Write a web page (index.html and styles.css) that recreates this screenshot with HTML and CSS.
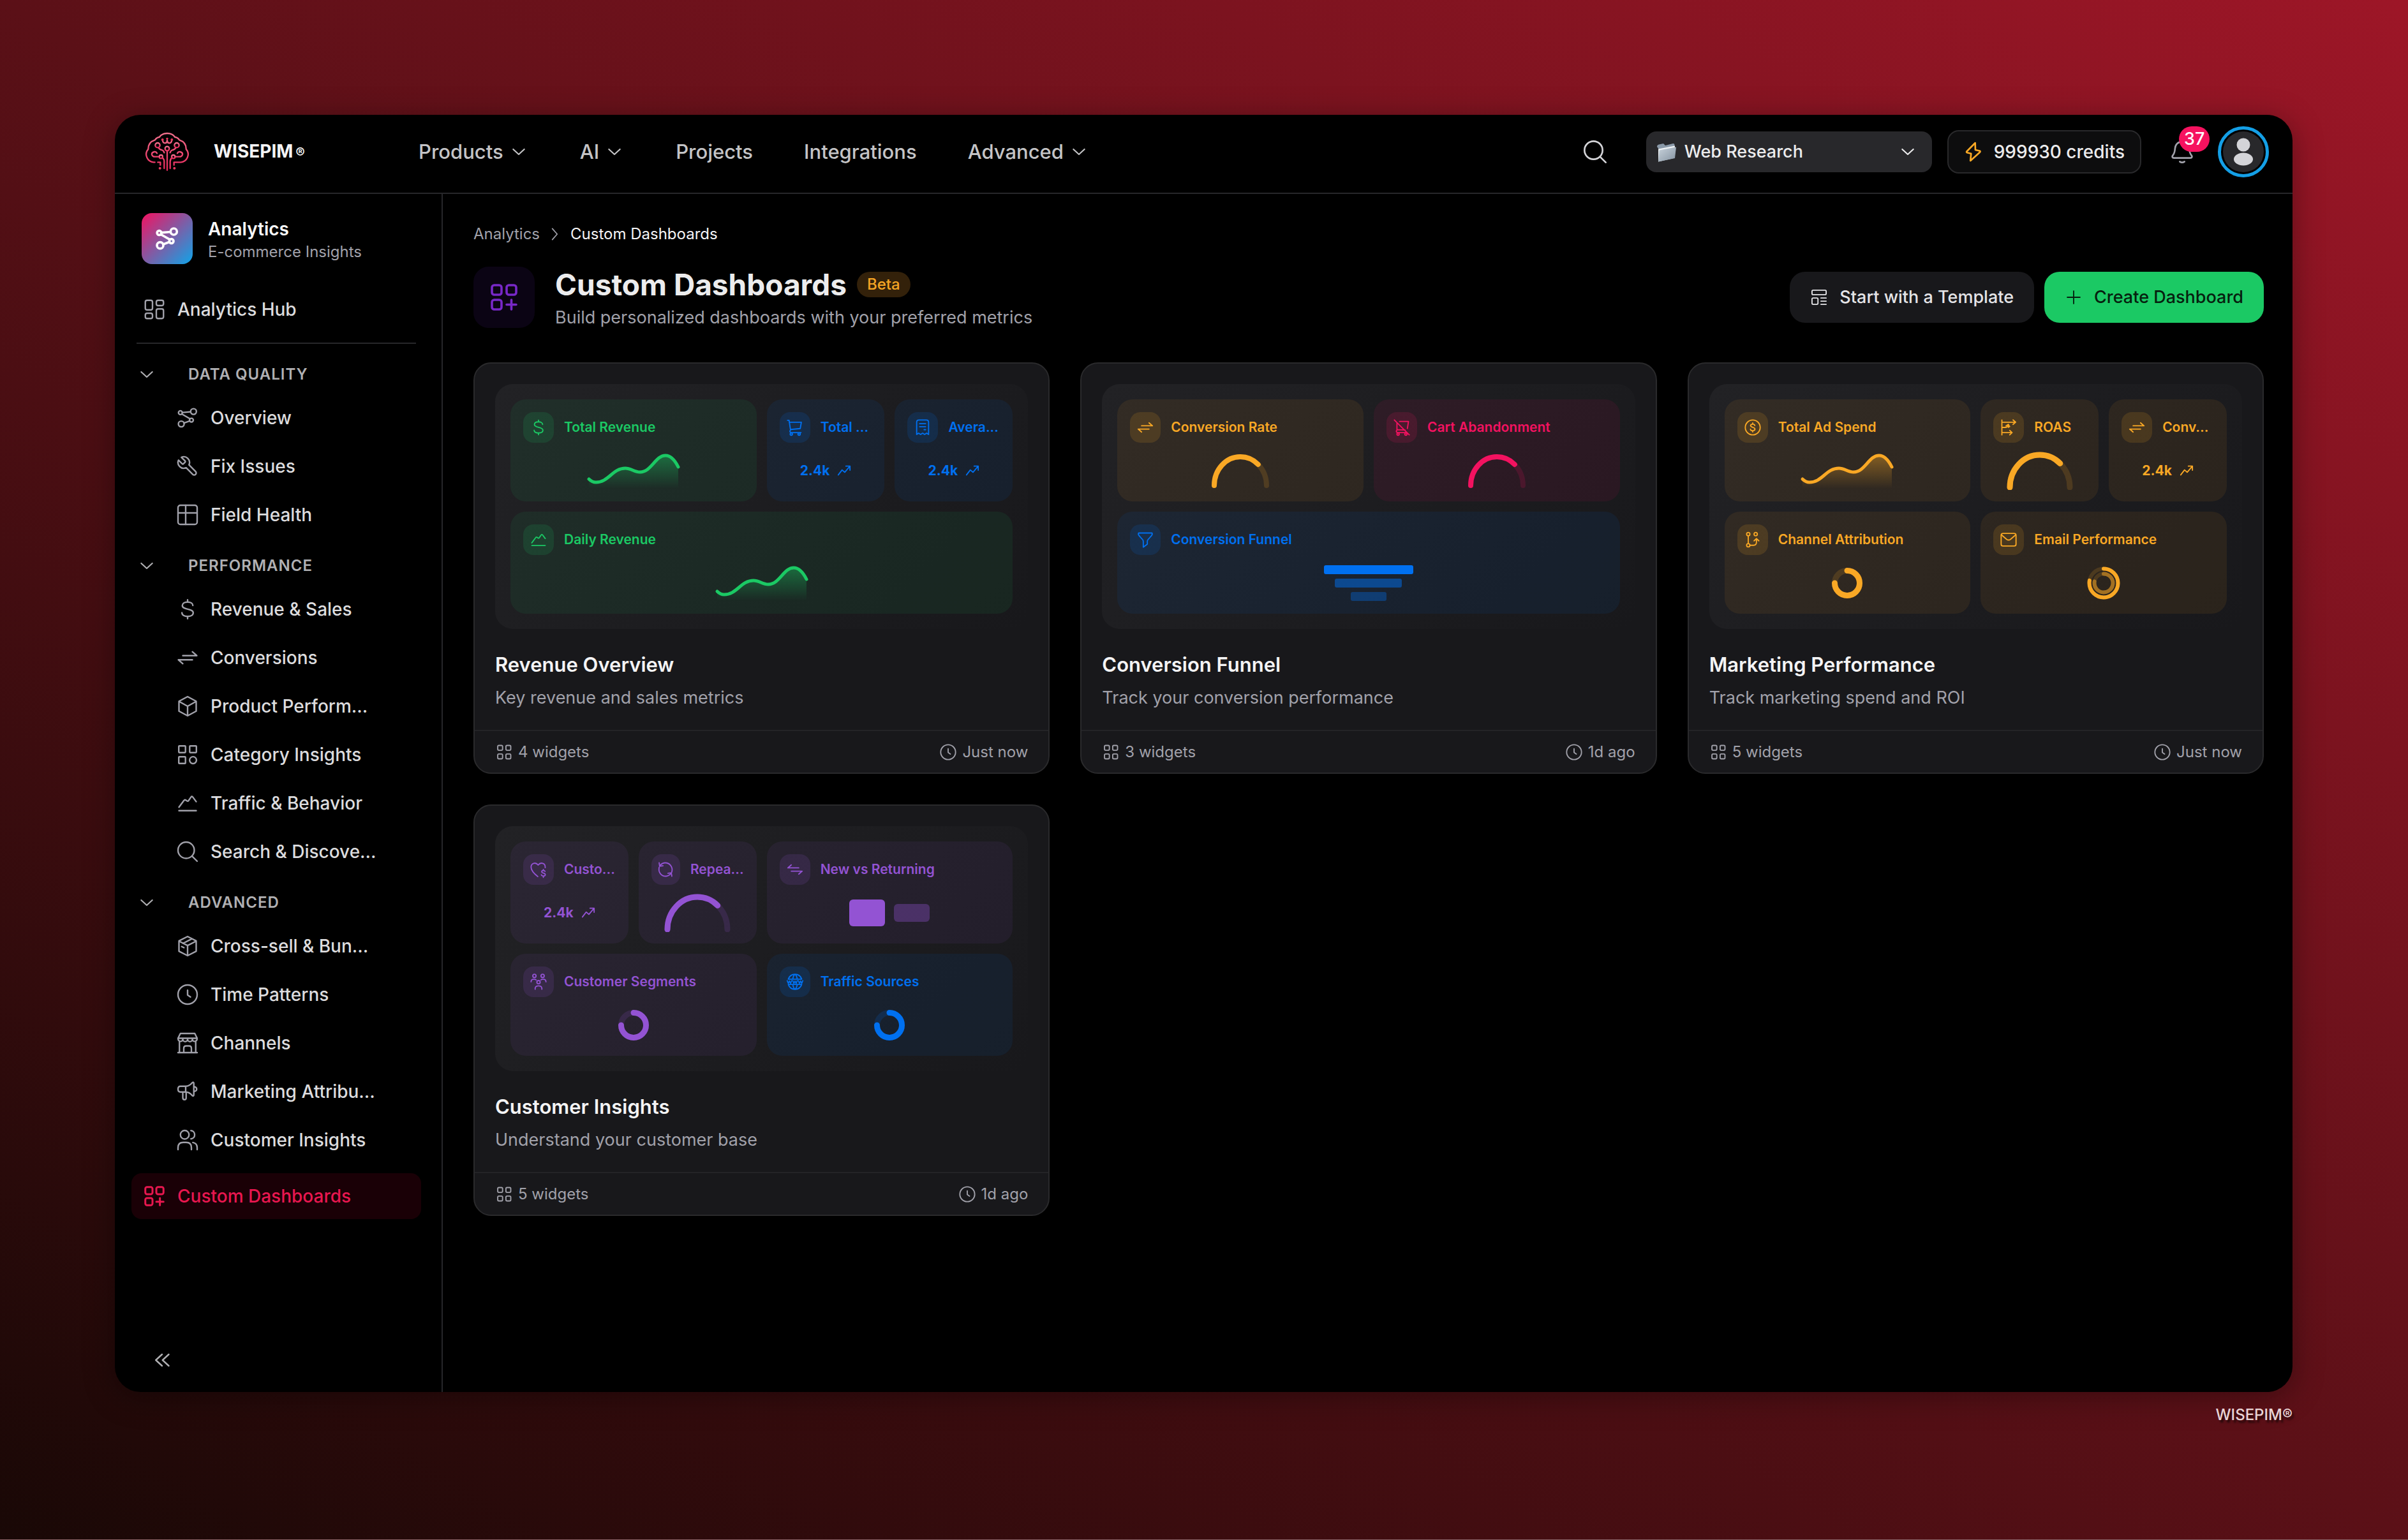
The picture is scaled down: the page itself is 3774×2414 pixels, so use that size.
FILE: index.html
```html
<!DOCTYPE html>
<html lang="en">
<head>
<meta charset="utf-8">
<meta name="viewport" content="width=device-width, initial-scale=1">
<title>Custom Dashboards – WISEPIM</title>
<link rel="stylesheet" href="styles.css">
</head>
<body>
<svg class="defs" aria-hidden="true">
  <defs>
    <linearGradient id="logoFill" x1="0" y1="0" x2="0" y2="1"><stop offset="0" stop-color="#f0708c"/><stop offset="1" stop-color="#e8295c"/></linearGradient>
    <linearGradient id="fade" x1="0" y1="0" x2="0" y2="1"><stop offset="0" stop-color="#fff" stop-opacity=".45"/><stop offset="1" stop-color="#fff" stop-opacity="0"/></linearGradient>
    <mask id="fadeMask" maskUnits="userSpaceOnUse" x="0" y="0" width="140" height="56"><rect width="140" height="56" fill="url(#fade)"/></mask>
    <linearGradient id="folderFill" x1="0" y1="0" x2="1" y2="1"><stop offset="0" stop-color="#c9d3dc"/><stop offset="1" stop-color="#8493a1"/></linearGradient>
  </defs>
  <symbol id="nodes" viewBox="0 0 24 24"><circle cx="4.5" cy="6.6" r="2"/><circle cx="18.2" cy="5.4" r="3"/><circle cx="16" cy="14.4" r="2"/><circle cx="5.4" cy="18.4" r="3"/><path d="M6.5 6.4l8.7-.7M6 8l8.6 5M14.2 15.2L8.2 17.4"/></symbol>
  <symbol id="dash" viewBox="0 0 24 24"><rect x="2.5" y="2.5" width="7.5" height="10" rx="1.8"/><rect x="14" y="2.5" width="7.5" height="5.5" rx="1.8"/><rect x="2.5" y="16" width="7.5" height="5.5" rx="1.8"/><rect x="14" y="11.5" width="7.5" height="10" rx="1.8"/></symbol>
  <symbol id="dash-add" viewBox="0 0 24 24"><rect x="2.5" y="2.5" width="7.5" height="7.5" rx="1.8"/><rect x="14" y="2.5" width="7.5" height="7.5" rx="1.8"/><rect x="2.5" y="14" width="7.5" height="7.5" rx="1.8"/><path d="M17.75 14v7.5M14 17.75h7.5"/></symbol>
  <symbol id="wrench" viewBox="0 0 24 24"><path transform="translate(24 0) scale(-1 1)" d="M14.7 6.3a1 1 0 0 0 0 1.4l1.6 1.6a1 1 0 0 0 1.4 0l3.77-3.77a6 6 0 0 1-7.94 7.94l-6.91 6.91a2.12 2.12 0 0 1-3-3l6.91-6.91a6 6 0 0 1 7.94-7.94l-3.76 3.76z"/></symbol>
  <symbol id="table" viewBox="0 0 24 24"><rect x="2" y="2" width="20" height="20" rx="2.5"/><path d="M10 2v20M2 10h20"/></symbol>
  <symbol id="dollar" viewBox="0 0 24 24"><path d="M12 2.2v2.3M12 19.5v2.3M17.5 8c0-2-2.2-3.5-5.5-3.5S6.5 6 6.5 8.2c0 4.8 11.4 2.6 11.4 7.5 0 2.4-2.5 3.8-5.9 3.8s-5.9-1.4-5.9-3.8"/></symbol>
  <symbol id="swap" viewBox="0 0 24 24"><path d="M7 9.8h14.6l-4.6-4M17 14.2H2.4l4.6 4"/></symbol>
  <symbol id="swap-l" viewBox="0 0 24 24"><path d="M17 9.8H2.4l4.6-4M7 14.2h14.6l-4.6 4"/></symbol>
  <symbol id="cube" viewBox="0 0 24 24"><path d="M12 2l9 4.8v10.4L12 22l-9-4.8V6.8zM3 7l9 5 9-5M12 12v10"/></symbol>
  <symbol id="category" viewBox="0 0 24 24"><rect x="2.8" y="2.8" width="7" height="7" rx=".6"/><rect x="14.2" y="2.8" width="7" height="7" rx=".6"/><rect x="2.8" y="14.2" width="7" height="7" rx=".6"/><circle cx="17.7" cy="17.7" r="3.6"/></symbol>
  <symbol id="trend" viewBox="0 0 24 24"><path d="M3 19.8h18M3 16.2l5.2-7q.8-1.2 2-.4l1 .8q1 .8 1.8-.3L15.6 5.6q.8-1.2 1.8 0L21 10.4"/></symbol>
  <symbol id="search" viewBox="0 0 24 24"><circle cx="10.5" cy="10.5" r="8.5"/><path d="M16.7 16.7L22 22"/></symbol>
  <symbol id="package" viewBox="0 0 24 24"><path d="M12 2l9 4.6v10.8L12 22l-9-4.600V6.600zM3 6.800l9 4.600 9-4.600M12 11.400V22M7.200 9.200l9-4.600M5.800 12.500l2.400 1.200"/></symbol>
  <symbol id="clock" viewBox="0 0 24 24"><circle cx="12" cy="12" r="10"/><path d="M12 7.500v5l3 2"/></symbol>
  <symbol id="store" viewBox="0 0 24 24"><path d="M3.500 11v10.800M20.500 11v10.800M2 22h20M4.500 2h15L22 7H2zM2 7c0 4.200 5 4.200 5 .8 0 3.600 5 3.600 5 0 0 3.600 5 3.600 5 0 0 3.400 5 3.400 5-.8M8 22v-4.500c0-1.500.8-2.500 2.500-2.500h3c1.700 0 2.500 1 2.500 2.500V22"/></symbol>
  <symbol id="mega" viewBox="0 0 24 24"><path d="M10 6.500H4.500Q2 6.500 2 9.500t2.500 3H10zM10 6.500c3 0 5.500-2 7-3.800q1.500-1 1.500 1v11.600q0 2-1.500 1c-1.500-1.800-4-3.800-7-3.800M7 12.500v6q0 2 1.800 2t1.700-2v-6M18.500 7c4 .5 4 4.500 0 5"/></symbol>
  <symbol id="users" viewBox="0 0 24 24"><circle cx="9" cy="6.500" r="4.500"/><path d="M2 22v-2q0-5.500 5.500-5.500h3q5.500 0 5.500 5.500v2M15.500 2.200c5.200.2 5.200 8.400 0 8.600M17.500 14.600Q22 15.500 22 20v2"/></symbol>
  <symbol id="chev" viewBox="0 0 24 24"><path d="M5.500 9l6.500 6 6.500-6"/></symbol>
  <symbol id="chev-r" viewBox="0 0 24 24"><path d="M8 4l7 8-7 8"/></symbol>
  <symbol id="chev-ll" viewBox="0 0 24 24"><path d="M12 6l-6.500 6 6.500 6M19 6l-6.500 6 6.500 6"/></symbol>
  <symbol id="bolt" viewBox="0 0 24 24"><path d="M14 1.500L4.200 11.400q-.9 1 .3 1.500l4.700 1.200-.8 8.400L19.600 12.400q.8-1-.3-1.500l-5.100-1.200z"/></symbol>
  <symbol id="bell" viewBox="0 0 24 24"><path d="M12 2.500C7.800 2.500 5.500 5.500 5.300 9c-.2 3.500-.6 4.500-2 6.200-1 1.300-.6 2.600 1 2.600h15.400c1.600 0 2-1.300 1-2.600-1.400-1.700-1.800-2.700-2-6.200-.2-3.500-2.500-6.500-6.700-6.500zM9.800 21.200q2.200 1.600 4.400 0"/></symbol>
  <symbol id="template" viewBox="0 0 24 24"><rect x="2.500" y="2.500" width="19" height="6" rx="1.500"/><rect x="2.500" y="13" width="8" height="8.500" rx="1.500"/><path d="M14.500 13h7M14.500 17.200h7M14.500 21.500h7"/></symbol>
  <symbol id="plus" viewBox="0 0 24 24"><path d="M12 3.500v17M3.500 12h17"/></symbol>
  <symbol id="grid" viewBox="0 0 24 24"><rect x="3.500" y="3" width="6.500" height="6.500" rx="1.500"/><rect x="14.500" y="3" width="6.500" height="6.500" rx="1.500"/><rect x="3.500" y="14.500" width="6.500" height="6.500" rx="1.500"/><rect x="14.500" y="14.500" width="6.500" height="6.500" rx="1.500"/></symbol>
  <symbol id="cart" viewBox="0 0 24 24"><path d="M2 2.500h2l2 13M5 5h15.500l-1.500 8.500L6 14.800M6 15.500q-2 2 .5 3.500H20"/><circle cx="7" cy="21" r="1.500"/><circle cx="17.500" cy="21" r="1.500"/></symbol>
  <symbol id="cart-off" viewBox="0 0 24 24"><path d="M2 2l20 20M9 4h12l-1.500 9.500M5.500 6v9l11 .5M5.500 15.500q-2 2 .5 3.500H18"/><circle cx="7" cy="21" r="1.500"/><circle cx="17.500" cy="21" r="1.500"/></symbol>
  <symbol id="receipt" viewBox="0 0 24 24"><path d="M4 21.500V5q0-3 3-3h10q3 0 3 3v16.500l-2.600-1.800-2.700 1.800-2.700-1.800-2.700 1.800-2.700-1.800zM8 7h8M8 11h8M14 15h2"/></symbol>
  <symbol id="up" viewBox="0 0 24 24"><path d="M2 19l6.500-8.500 4.500 4L21.500 4.500M15 4h7v7"/></symbol>
  <symbol id="filter" viewBox="0 0 24 24"><path d="M3 3h18q1 2-1 4l-4.500 5q-.8 1-.8 2.500v3.500l-5.400 4v-7.500q0-1.500-.8-2.500L4 7Q2 5 3 3z"/></symbol>
  <symbol id="coin" viewBox="0 0 24 24"><circle cx="12" cy="12" r="10"/><path d="M14.800 9.500c0-1.200-1.200-1.900-2.800-1.900s-2.900.7-2.900 2.100c0 2.800 5.900 1.600 5.900 4.500 0 1.400-1.400 2.200-3 2.200s-3-.8-3-2.100M12 6v1.500M12 16.500V18"/></symbol>
  <symbol id="roas" viewBox="0 0 24 24"><path d="M3 2v20M3 5h18M18 2l3.500 3L18 8M3 19h13M13.500 16l3.200 3-3.200 3M3 12h5q3 0 3.500-3.500M8.500 10l3-2 2 3M12 8v4"/></symbol>
  <symbol id="branch" viewBox="0 0 24 24"><circle cx="6" cy="4.500" r="2.200"/><circle cx="16" cy="4.500" r="2.200"/><circle cx="6" cy="19.500" r="2.200"/><path d="M6 6.700v10.600M8.200 19.500H13q4 0 4-4V11M13.800 13.500L17 10.500l3.200 3"/></symbol>
  <symbol id="mail" viewBox="0 0 24 24"><rect x="2" y="3.500" width="20" height="17" rx="2.500"/><path d="M2.500 5.500l7 6q2.500 1.900 5 0l7-6"/></symbol>
  <symbol id="heart" viewBox="0 0 24 24"><path d="M11 21.500C6 17.500 2 13.500 2 8.800 2 3.500 8 1.500 11.500 6 15 1.500 21.500 3.500 21 9.500M20.800 14.500q-.6-1.200-2.300-1.200-2.200 0-2.200 1.700c0 2.400 4.800 1.400 4.800 3.800 0 1.700-1.300 1.900-2.600 1.900-1.700 0-2.500-.6-2.700-1.700M18.500 12v1.300M18.500 21v1.500"/></symbol>
  <symbol id="refresh" viewBox="0 0 24 24"><path d="M20.500 15.500C22.500 8 17 2.500 11 3c-3 .3-5 1.800-6.500 4M3.500 3l.7 4.500 4.500-.5M3.500 9C1.800 16 7 21.500 13 21c3-.3 5-1.800 6.500-4M20.500 21l-.7-4.500-4.500.5"/></symbol>
  <symbol id="segments" viewBox="0 0 24 24"><circle cx="6.500" cy="4" r="2.200"/><circle cx="17.500" cy="4" r="2.200"/><circle cx="12" cy="12.500" r="2.200"/><path d="M2 12q0-3.500 4-3.500 1.800 0 2.800 1M22 12q0-3.500-4-3.500-1.800 0-2.800 1M7.500 22v-1.500q.5-3 4.500-3t4.500 3V22"/></symbol>
  <symbol id="globe" viewBox="0 0 24 24"><path d="M3 8.500C6-.2 18-.2 21 8.500zM3 15.500c3 8.700 15 8.700 18 0zM9 8.500q.8-5 3-6.500 2.200 1.500 3 6.500M9 15.500q.8 5 3 6.500 2.200-1.500 3-6.500M1.500 10.500l1.500 3.500 1.500-3 1.500 3 1.500-3.500M9 10.500l1.500 3.500 1.500-3 1.500 3 1.500-3.500M16.500 10.500L18 14l1.500-3 1.500 3 1.500-3.500"/></symbol>
  <symbol id="spark" viewBox="0 0 140 56"><path class="area" mask="url(#fadeMask)" d="M0 41Q5 46 11 46C31 46 37 24 57 24C66 24 71 30 80 30C98 30 104 4 120 4C130 4 136 14 140 22V56H0z"/><path class="line" d="M0 41Q5 46 11 46C31 46 37 24 57 24C66 24 71 30 80 30C98 30 104 4 120 4C130 4 136 14 140 22"/></symbol>
</svg>

<div class="window">
  <header class="topbar">
    <a class="brand" href="#">
      <svg class="logo" viewBox="48 48 216 192" aria-hidden="true">
        <path d="M98 193H92Q70 191 61 171Q51 149 67 131Q66 99 99 88Q107 76 119 75Q131 57 156 57Q181 57 193 75Q205 76 213 88Q246 99 245 131Q261 149 251 171Q242 191 220 193H188V206M124 206V193H112M156 140V230M108 151Q104 142 95 144Q82 147 84 157Q87 167 98 167H118M204 151Q208 142 217 144Q230 147 228 157Q225 167 214 167H194M115 124Q120 134 130 135Q140 138 142 148M197 124Q192 134 182 135Q172 138 170 148M133 172Q142 178 142 190V222M179 172Q170 178 170 190V222M135 92Q136 103 147 103Q156 102 156 90Q156 102 165 103Q176 103 177 92"/>
        <circle cx="111" cy="113" r="11"/><circle cx="201" cy="113" r="11"/><circle cx="156" cy="129" r="10"/><circle cx="127" cy="167" r="8"/><circle cx="185" cy="167" r="8"/>
        <g class="dots"><circle cx="134" cy="87" r="6"/><circle cx="156" cy="82" r="5"/><circle cx="178" cy="87" r="6"/><circle cx="122" cy="221" r="6"/><circle cx="190" cy="221" r="6"/></g>
      </svg>
      <span class="brand-name">WISEPIM<small>®</small></span>
    </a>
    <nav class="topnav" aria-label="Main">
      <button type="button">Products<svg class="ic s32"><use href="#chev"/></svg></button>
      <button type="button">AI<svg class="ic s32"><use href="#chev"/></svg></button>
      <a href="#">Projects</a>
      <a href="#">Integrations</a>
      <button type="button">Advanced<svg class="ic s32"><use href="#chev"/></svg></button>
    </nav>
    <div class="tools">
      <button class="icon-btn search" type="button" aria-label="Search"><svg class="ic s40"><use href="#search"/></svg></button>
      <label class="picker">
        <svg class="folder" viewBox="0 0 34 34" aria-hidden="true"><path d="M3 9q0-3 3-3.500l7-1.500 3 3 12-3q2.500-.4 2.500 2V12L8 16z" fill="#8a99a8"/><path d="M5 12.500L31 7.500v19L5 32.500z" fill="#eef2f5"/><path d="M6.500 14.500L33 9.500l-2 17.500L5 32.500z" fill="url(#folderFill)"/></svg>
        <select aria-label="Project"><option>Web Research</option></select>
        <svg class="ic s32"><use href="#chev"/></svg>
      </label>
      <button class="credits" type="button"><svg class="ic s32"><use href="#bolt"/></svg>999930 credits</button>
      <button class="icon-btn bell" type="button" aria-label="Notifications"><svg class="ic s40"><use href="#bell"/></svg><span class="count">37</span></button>
      <button class="avatar" type="button" aria-label="Account"><svg viewBox="0 0 64 64"><circle cx="32" cy="32" r="32" fill="#28282b"/><circle cx="32" cy="21" r="10.500" fill="#d4d4d8"/><ellipse cx="32" cy="43.500" rx="15" ry="10" fill="#d4d4d8"/></svg></button>
    </div>
  </header>

  <div class="body">
    <aside class="sidebar">
      <div class="module">
        <span class="module-icon"><svg class="ic s40"><use href="#nodes"/></svg></span>
        <div class="module-text"><strong>Analytics</strong><span>E-commerce Insights</span></div>
      </div>
      <nav class="menu" aria-label="Analytics">
        <a class="item" href="#"><svg class="ic s36"><use href="#dash"/></svg>Analytics Hub</a>
        <hr>
        <button class="group" type="button"><svg class="ic s32"><use href="#chev"/></svg>Data Quality</button>
        <a class="item sub" href="#"><svg class="ic s36"><use href="#nodes"/></svg>Overview</a>
        <a class="item sub" href="#"><svg class="ic s36"><use href="#wrench"/></svg>Fix Issues</a>
        <a class="item sub" href="#"><svg class="ic s36"><use href="#table"/></svg>Field Health</a>
        <button class="group" type="button"><svg class="ic s32"><use href="#chev"/></svg>Performance</button>
        <a class="item sub" href="#"><svg class="ic s36"><use href="#dollar"/></svg>Revenue &amp; Sales</a>
        <a class="item sub" href="#"><svg class="ic s36"><use href="#swap"/></svg>Conversions</a>
        <a class="item sub" href="#"><svg class="ic s36"><use href="#cube"/></svg>Product Perform...</a>
        <a class="item sub" href="#"><svg class="ic s36"><use href="#category"/></svg>Category Insights</a>
        <a class="item sub" href="#"><svg class="ic s36"><use href="#trend"/></svg>Traffic &amp; Behavior</a>
        <a class="item sub" href="#"><svg class="ic s36"><use href="#search"/></svg>Search &amp; Discove...</a>
        <button class="group" type="button"><svg class="ic s32"><use href="#chev"/></svg>Advanced</button>
        <a class="item sub" href="#"><svg class="ic s36"><use href="#package"/></svg>Cross-sell &amp; Bun...</a>
        <a class="item sub" href="#"><svg class="ic s36"><use href="#clock"/></svg>Time Patterns</a>
        <a class="item sub" href="#"><svg class="ic s36"><use href="#store"/></svg>Channels</a>
        <a class="item sub" href="#"><svg class="ic s36"><use href="#mega"/></svg>Marketing Attribu...</a>
        <a class="item sub" href="#"><svg class="ic s36"><use href="#users"/></svg>Customer Insights</a>
        <a class="item active" href="#" aria-current="page"><svg class="ic s36"><use href="#dash-add"/></svg>Custom Dashboards</a>
      </nav>
      <button class="icon-btn collapse" type="button" aria-label="Collapse sidebar"><svg class="ic s36"><use href="#chev-ll"/></svg></button>
    </aside>

    <main class="main">
      <nav class="crumbs" aria-label="Breadcrumb"><a href="#">Analytics</a><svg class="ic s26"><use href="#chev-r"/></svg><span>Custom Dashboards</span></nav>
      <div class="page-head">
        <span class="page-icon"><svg class="ic s48"><use href="#dash-add"/></svg></span>
        <div class="page-title">
          <div class="title-row"><h1>Custom Dashboards</h1><span class="beta">Beta</span></div>
          <p>Build personalized dashboards with your preferred metrics</p>
        </div>
        <div class="actions">
          <button class="btn" type="button"><svg class="ic s28"><use href="#template"/></svg>Start with a Template</button>
          <button class="btn primary" type="button"><svg class="ic s28"><use href="#plus"/></svg>Create Dashboard</button>
        </div>
      </div>

      <div class="cards">
        <article class="card">
          <div class="preview">
            <section class="tile wide green"><h3><span class="chip"><svg class="ic s28"><use href="#dollar"/></svg></span>Total Revenue</h3><div class="viz"><svg class="spark"><use href="#spark"/></svg></div></section>
            <section class="tile blue"><h3><span class="chip"><svg class="ic s28"><use href="#cart"/></svg></span>Total ...</h3><div class="viz"><b>2.4k</b><svg class="ic s22"><use href="#up"/></svg></div></section>
            <section class="tile blue"><h3><span class="chip"><svg class="ic s28"><use href="#receipt"/></svg></span>Avera...</h3><div class="viz"><b>2.4k</b><svg class="ic s22"><use href="#up"/></svg></div></section>
            <section class="tile full green"><h3><span class="chip"><svg class="ic s28"><use href="#trend"/></svg></span>Daily Revenue</h3><div class="viz"><svg class="spark"><use href="#spark"/></svg></div></section>
          </div>
          <h2>Revenue Overview</h2><p>Key revenue and sales metrics</p>
          <footer><span><svg class="ic s28"><use href="#grid"/></svg>4 widgets</span><span><svg class="ic s28"><use href="#clock"/></svg>Just now</span></footer>
        </article>

        <article class="card">
          <div class="preview">
            <section class="tile wide amber"><h3><span class="chip"><svg class="ic s28"><use href="#swap"/></svg></span>Conversion Rate</h3><div class="viz"><svg class="gauge" viewBox="0 0 92 56"><path class="track" d="M5 51A41 45 0 0 1 87 51"/><path pathLength="100" stroke-dasharray="73 200" d="M5 51A41 45 0 0 1 87 51"/></svg></div></section>
            <section class="tile wide rose"><h3><span class="chip"><svg class="ic s28"><use href="#cart-off"/></svg></span>Cart Abandonment</h3><div class="viz"><svg class="gauge" viewBox="0 0 92 56"><path class="track" d="M5 51A41 45 0 0 1 87 51"/><path pathLength="100" stroke-dasharray="73 200" d="M5 51A41 45 0 0 1 87 51"/></svg></div></section>
            <section class="tile full blue"><h3><span class="chip"><svg class="ic s28"><use href="#filter"/></svg></span>Conversion Funnel</h3><div class="viz funnel"><i></i><i></i><i></i></div></section>
          </div>
          <h2>Conversion Funnel</h2><p>Track your conversion performance</p>
          <footer><span><svg class="ic s28"><use href="#grid"/></svg>3 widgets</span><span><svg class="ic s28"><use href="#clock"/></svg>1d ago</span></footer>
        </article>

        <article class="card">
          <div class="preview">
            <section class="tile wide amber"><h3><span class="chip"><svg class="ic s28"><use href="#coin"/></svg></span>Total Ad Spend</h3><div class="viz"><svg class="spark"><use href="#spark"/></svg></div></section>
            <section class="tile amber"><h3><span class="chip"><svg class="ic s28"><use href="#roas"/></svg></span>ROAS</h3><div class="viz"><svg class="gauge large" viewBox="0 0 104 60"><path class="track" d="M5 56A47 51 0 0 1 99 56"/><path pathLength="100" stroke-dasharray="73 200" d="M5 56A47 51 0 0 1 99 56"/></svg></div></section>
            <section class="tile amber"><h3><span class="chip"><svg class="ic s28"><use href="#swap"/></svg></span>Conv...</h3><div class="viz"><b>2.4k</b><svg class="ic s22"><use href="#up"/></svg></div></section>
            <section class="tile wide amber"><h3><span class="chip"><svg class="ic s28"><use href="#branch"/></svg></span>Channel Attribution</h3><div class="viz"><svg class="donut" viewBox="0 0 52 52"><circle class="track" cx="26" cy="26" r="19.500"/><path pathLength="100" stroke-dasharray="75 200" d="M26 6.500a19.500 19.500 0 1 1 0 39 19.500 19.500 0 1 1 0-39"/></svg></div></section>
            <section class="tile wide amber"><h3><span class="chip"><svg class="ic s28"><use href="#mail"/></svg></span>Email Performance</h3><div class="viz"><svg class="donut rings" viewBox="0 0 52 52"><circle class="track" cx="26" cy="26" r="22.500"/><path pathLength="100" stroke-dasharray="78 200" d="M26 3.500a22.500 22.500 0 1 1 0 45 22.500 22.500 0 1 1 0-45"/><circle class="track" cx="26" cy="26" r="14.500"/><path opacity=".5" pathLength="100" stroke-dasharray="78 200" d="M26 11.500a14.500 14.500 0 1 1 0 29 14.500 14.500 0 1 1 0-29"/></svg></div></section>
          </div>
          <h2>Marketing Performance</h2><p>Track marketing spend and ROI</p>
          <footer><span><svg class="ic s28"><use href="#grid"/></svg>5 widgets</span><span><svg class="ic s28"><use href="#clock"/></svg>Just now</span></footer>
        </article>

        <article class="card">
          <div class="preview">
            <section class="tile purple"><h3><span class="chip"><svg class="ic s28"><use href="#heart"/></svg></span>Custo...</h3><div class="viz"><b>2.4k</b><svg class="ic s22"><use href="#up"/></svg></div></section>
            <section class="tile purple"><h3><span class="chip"><svg class="ic s28"><use href="#refresh"/></svg></span>Repea...</h3><div class="viz"><svg class="gauge large" viewBox="0 0 104 60"><path class="track" d="M5 56A47 51 0 0 1 99 56"/><path pathLength="100" stroke-dasharray="73 200" d="M5 56A47 51 0 0 1 99 56"/></svg></div></section>
            <section class="tile wide purple"><h3><span class="chip"><svg class="ic s28"><use href="#swap-l"/></svg></span>New vs Returning</h3><div class="viz compare"><i></i><i></i></div></section>
            <section class="tile wide purple"><h3><span class="chip"><svg class="ic s28"><use href="#segments"/></svg></span>Customer Segments</h3><div class="viz"><svg class="donut" viewBox="0 0 52 52"><circle class="track" cx="26" cy="26" r="19.500"/><path pathLength="100" stroke-dasharray="75 200" d="M26 6.500a19.500 19.500 0 1 1 0 39 19.500 19.500 0 1 1 0-39"/></svg></div></section>
            <section class="tile wide blue"><h3><span class="chip"><svg class="ic s28"><use href="#globe"/></svg></span>Traffic Sources</h3><div class="viz"><svg class="donut" viewBox="0 0 52 52"><circle class="track" cx="26" cy="26" r="19.500"/><path pathLength="100" stroke-dasharray="75 200" d="M26 6.500a19.500 19.500 0 1 1 0 39 19.500 19.500 0 1 1 0-39"/></svg></div></section>
          </div>
          <h2>Customer Insights</h2><p>Understand your customer base</p>
          <footer><span><svg class="ic s28"><use href="#grid"/></svg>5 widgets</span><span><svg class="ic s28"><use href="#clock"/></svg>1d ago</span></footer>
        </article>
      </div>
    </main>
  </div>
</div>
<div class="credit">WISEPIM®</div>
</body>
</html>
```
FILE: styles.css
```css
* { box-sizing: border-box; }

body {
  margin: 0;
  min-height: 100vh;
  padding: 180px 181px 0 180px;
  display: flex;
  flex-direction: column;
  background: linear-gradient(to top right, #190806 0%, #5b1017 50%, #9d1627 100%);
  border-bottom: 1px solid #8a6266;
  color: #ececed;
  font-family: Inter, "Liberation Sans", sans-serif;
  font-size: 27px;
  line-height: 40px;
}

h1, h2, h3, p { margin: 0; }
a { color: inherit; text-decoration: none; }
button, select {
  font: inherit;
  color: inherit;
  background: none;
  border: 0;
  padding: 0;
  margin: 0;
  appearance: none;
  cursor: pointer;
}
.defs { position: absolute; width: 0; height: 0; }

.ic {
  flex: none;
  display: block;
  fill: none;
  stroke: currentColor;
  stroke-width: 1.6;
  stroke-linecap: round;
  stroke-linejoin: round;
}
.s22 { width: 22px; height: 22px; }
.s26 { width: 26px; height: 26px; }
.s28 { width: 28px; height: 28px; }
.s32 { width: 32px; height: 32px; }
.s36 { width: 36px; height: 36px; }
.s40 { width: 40px; height: 40px; }
.s48 { width: 48px; height: 48px; }

.window {
  flex: 1;
  display: flex;
  flex-direction: column;
  background: #000;
  border-radius: 40px;
  overflow: hidden;
  box-shadow: 0 8px 48px rgba(0, 0, 0, .35);
}

/* Top bar */
.topbar {
  display: flex;
  align-items: center;
  height: 124px;
  padding: 0 37px 6px 46px;
  border-bottom: 2px solid #27272a;
}
.brand { display: flex; align-items: center; gap: 37px; width: 430px; }
.logo {
  width: 72px;
  height: 64px;
  fill: none;
  stroke: url(#logoFill);
  stroke-width: 7;
  stroke-linecap: round;
  stroke-linejoin: round;
}
.logo .dots { fill: #e8395f; stroke: none; }
.brand-name { font-size: 28px; font-weight: 700; color: #f4f4f5; }
.brand-name small { margin-left: 4px; font-size: 22px; }
.topnav {
  display: flex;
  gap: 80px;
  font-size: 31px;
  font-weight: 500;
  color: #c4c4c6;
}
.topnav button { display: flex; align-items: center; gap: 8px; }
.tools { display: flex; align-items: center; margin-left: auto; }
.icon-btn { color: #d4d4d8; }
.search { margin-right: 60px; }
.picker {
  display: flex;
  align-items: center;
  width: 448px;
  height: 64px;
  padding: 0 22px 0 14px;
  gap: 12px;
  border-radius: 16px;
  background: #28282b;
  color: #ececed;
}
.folder { width: 34px; height: 34px; }
.picker select { flex: 1; font-weight: 500; text-align: left; }
.credits {
  display: flex;
  align-items: center;
  gap: 16px;
  height: 68px;
  margin-left: 24px;
  padding: 0 24px 0 23px;
  border: 2px solid #29292b;
  border-radius: 18px;
  background: #0d0d0e;
  font-size: 28px;
  font-weight: 500;
}
.credits .ic { color: #f9a825; stroke-width: 2; }
.bell { position: relative; margin-left: 44px; color: #a1a1aa; }
.count {
  position: absolute;
  left: 15px;
  bottom: 20px;
  padding: 0 8px;
  border-radius: 20px;
  background: #f6125f;
  color: #fff;
  font-weight: 500;
  font-size: 27px;
  line-height: 40px;
}
.avatar {
  width: 80px;
  height: 80px;
  margin-left: 36px;
  padding: 3px;
  border: 5px solid #149fe6;
  border-radius: 50%;
}
.avatar svg { display: block; }

/* Sidebar */
.body { flex: 1; display: grid; grid-template-columns: 514px 1fr; }
.sidebar {
  display: flex;
  flex-direction: column;
  padding: 30px 32px 32px 26px;
  border-right: 2px solid #27272a;
}
.module { display: flex; align-items: center; gap: 24px; padding-left: 16px; }
.module-icon {
  display: grid;
  place-items: center;
  width: 80px;
  height: 80px;
  border-radius: 16px;
  background: linear-gradient(135deg, #f31260, #0ea5e9);
  color: #fff;
}
.module-icon .ic { stroke-width: 2.2; }
.module-text { display: flex; flex-direction: column; padding-top: 6px; line-height: 36px; }
.module-text strong { font-size: 28px; font-weight: 600; color: #fafafa; }
.module-text span { font-size: 24px; color: #a1a1aa; }
.menu { display: flex; flex-direction: column; gap: 4px; margin-top: 35px; }
.item {
  display: flex;
  align-items: center;
  gap: 18px;
  height: 72px;
  padding: 0 18px;
  border-radius: 16px;
  font-size: 28px;
  font-weight: 500;
  color: #dcdcde;
  white-space: nowrap;
}
.item .ic { color: #a1a1aa; }
.sub { padding-left: 70px; }
.menu hr { width: 438px; height: 2px; margin: 12px 8px 16px; border: 0; background: #27272a; }
.group {
  display: flex;
  align-items: center;
  gap: 49px;
  height: 56px;
  padding-left: 8px;
  font-size: 24px;
  font-weight: 600;
  letter-spacing: 1px;
  text-transform: uppercase;
  color: #b0b0b3;
}
.sub + .group { margin-top: 12px; }
.active { margin-top: 12px; background: #1a0006; color: #e8174f; }
.active .ic { color: inherit; stroke-width: 2; }
.collapse { align-self: flex-start; margin: auto 0 0 30px; color: #b0b0b3; }

/* Page */
.main { padding: 47px 45px 48px 48px; min-width: 0; }
.crumbs { display: flex; align-items: center; gap: 11px; font-size: 24px; line-height: 32px; color: #a1a1aa; }
.crumbs span { color: #f4f4f5; }
.page-head { display: flex; align-items: flex-start; gap: 32px; margin-top: 35px; }
.page-icon {
  display: grid;
  place-items: center;
  width: 96px;
  height: 96px;
  border-radius: 24px;
  background: #0b0414;
  color: #7828c8;
}
.page-icon .ic { stroke-width: 1.8; }
.page-title p { margin-top: 4px; color: #a1a1aa; }
.title-row { display: flex; align-items: center; gap: 16px; }
h1 { font-size: 46px; font-weight: 700; line-height: 56px; color: #ececed; }
.beta {
  padding: 0 16px;
  border-radius: 20px;
  background: #33210a;
  color: #f5a524;
  font-size: 24px;
  font-weight: 500;
}
.actions { display: flex; gap: 16px; margin: 8px 0 0 auto; }
.btn {
  display: flex;
  align-items: center;
  gap: 18px;
  height: 80px;
  padding: 0 32px;
  border-radius: 24px;
  background: #18181b;
  font-weight: 500;
  color: #e4e4e7;
}
.primary { background: #1bc964; color: #06200f; }

/* Cards */
.cards {
  display: grid;
  grid-template-columns: repeat(3, 1fr);
  gap: 48px;
  margin-top: 50px;
}
.card {
  border: 2px solid #2a2a2c;
  border-radius: 28px;
  background: #18181b;
  padding-top: 32px;
  min-width: 0;
}
.preview {
  display: grid;
  grid-template-columns: repeat(4, 1fr);
  grid-auto-rows: 160px;
  gap: 16px;
  margin: 0 32px;
  padding: 24px;
  border-radius: 28px;
  background: linear-gradient(135deg, #222225, #18181b);
}
.tile {
  display: flex;
  flex-direction: column;
  gap: 16px;
  min-width: 0;
  padding: 20px;
  border-radius: 24px;
  background: color-mix(in srgb, currentColor 8%, transparent);
}
.wide { grid-column: span 2; }
.full { grid-column: span 4; }
.green { color: #1bc964; }
.blue { color: #0070f0; }
.amber { color: #f9a825; }
.rose { color: #f31260; }
.purple { color: #9353d3; }
.tile h3 {
  display: flex;
  align-items: center;
  gap: 16px;
  font-size: 21px;
  line-height: 28px;
  font-weight: 600;
  white-space: nowrap;
}
.chip {
  display: grid;
  place-items: center;
  width: 48px;
  height: 48px;
  border-radius: 16px;
  background: color-mix(in srgb, currentColor 14%, transparent);
}
.viz { display: flex; align-items: center; justify-content: center; gap: 12px; height: 56px; }
.viz b { font-size: 21px; font-weight: 700; }
.viz .s22 { stroke-width: 2; }
.spark { width: 140px; height: 56px; overflow: visible; }
#spark { overflow: visible; }
.area { fill: currentColor; }
.line { fill: none; stroke: currentColor; stroke-width: 5; stroke-linecap: round; }
.gauge, .donut { fill: none; stroke: currentColor; stroke-width: 8; stroke-linecap: round; }
.gauge { width: 92px; height: 56px; }
.gauge.large { flex: none; width: 104px; height: 60px; stroke-width: 9; }
.donut { width: 52px; height: 52px; stroke-width: 9; }
.rings { stroke-width: 6; }
.track { stroke-opacity: .16; }
.funnel { flex-direction: column; gap: 7px; }
.funnel i { width: 140px; height: 14px; border-radius: 3px; background: currentColor; }
.funnel i:nth-child(2) { width: 105px; opacity: .5; }
.funnel i:nth-child(3) { width: 56px; opacity: .35; }
.compare { gap: 14px; }
.compare i { width: 56px; height: 42px; border-radius: 6px; background: currentColor; }
.compare i + i { height: 28px; opacity: .35; }
.card h2 {
  margin: 32px 32px 0;
  font-size: 31px;
  line-height: 48px;
  font-weight: 600;
  color: #f4f4f5;
}
.card p { margin: 8px 32px 30px; color: #a1a1aa; }
.card footer {
  display: flex;
  justify-content: space-between;
  padding: 13px 32px 12px;
  border-top: 2px solid #242427;
  font-size: 24px;
  color: #a1a1aa;
}
.card footer span { display: flex; align-items: center; gap: 8px; }

.credit {
  height: 231px;
  padding-top: 16px;
  text-align: right;
  font-size: 24px;
  font-weight: 500;
  color: #e8d4d6;
  text-shadow: 3px 4px 3px rgba(0, 0, 0, .6);
}
```
